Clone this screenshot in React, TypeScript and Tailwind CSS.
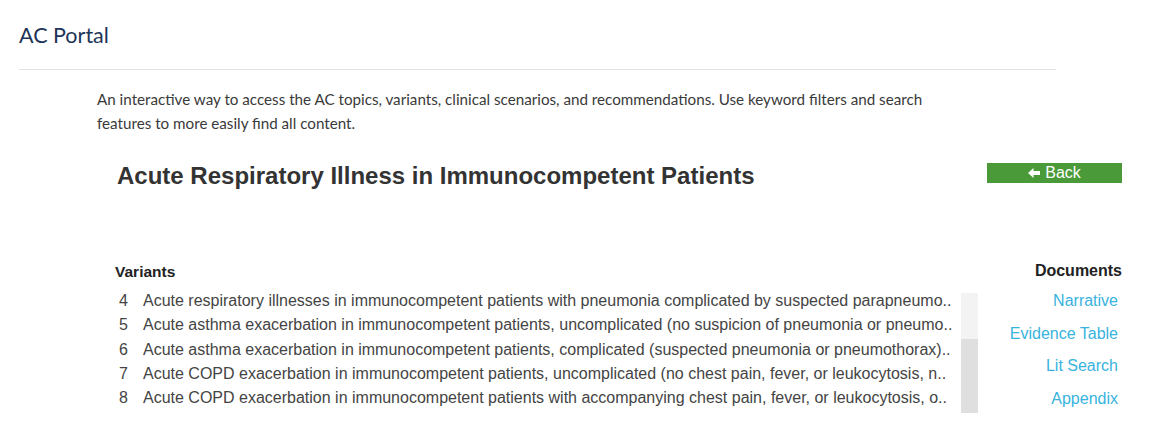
import React from "react";

const variants = [
  { id: 4, text: "Acute respiratory illnesses in immunocompetent patients with pneumonia complicated by suspected parapneumo.." },
  { id: 5, text: "Acute asthma exacerbation in immunocompetent patients, uncomplicated (no suspicion of pneumonia or pneumo.." },
  { id: 6, text: "Acute asthma exacerbation in immunocompetent patients, complicated (suspected pneumonia or pneumothorax).." },
  { id: 7, text: "Acute COPD exacerbation in immunocompetent patients, uncomplicated (no chest pain, fever, or leukocytosis, n.." },
  { id: 8, text: "Acute COPD exacerbation in immunocompetent patients with accompanying chest pain, fever, or leukocytosis, o.." },
];

const documents = ["Narrative", "Evidence Table", "Lit Search", "Appendix"];

const BackArrow = () => (
  <svg width="12" height="10" viewBox="0 0 12 10" fill="white">
    <polygon points="0,5 5.5,0 5.5,3 12,3 12,7 5.5,7 5.5,10" />
  </svg>
);

export default function App() {
  return (
    <div className="w-[1159px] h-[436px] bg-white overflow-hidden">
      <div className="px-[19px] pt-[21px]">
        <h1 className="font-['Lato',sans-serif] text-[21.5px] leading-[28px] text-[#1d3557] font-normal">AC Portal</h1>
        <div className="w-[1037px] border-t border-[#e3e3e3] mt-[20px]" />
      </div>

      <div className="ml-[97px] w-[1025px]">
        <p className="mt-[17px] font-['Lato',sans-serif] text-[15.2px] leading-[24px] text-[#3a3a3a]">
          An interactive way to access the AC topics, variants, clinical scenarios, and recommendations. Use keyword filters and search
          <br />
          features to more easily find all content.
        </p>

        <div className="flex items-start justify-between mt-[27px] font-['Liberation_Sans',Arial,sans-serif]">
          <h2 className="ml-[20px] text-[24px] leading-[28px] font-bold text-[#333]">
            Acute Respiratory Illness in Immunocompetent Patients
          </h2>
          <button
            type="button"
            className="mt-[1px] w-[135px] h-[20px] bg-[#4a9a3a] flex items-center justify-center gap-[5px] text-white text-[16px] leading-[20px]"
          >
            <BackArrow />
            <span>Back</span>
          </button>
        </div>

        <div className="flex mt-[70px] font-['Liberation_Sans',Arial,sans-serif]">
          <div className="flex-1 pl-[18px]">
            <h3 className="text-[15.5px] leading-[20px] font-bold text-[#222] mt-[2px]">Variants</h3>
            <div className="flex items-start mt-[7px]">
              <ul className="w-[846px] h-[125px] overflow-hidden">
                {variants.map((v) => (
                  <li key={v.id} className="flex h-[24.25px] items-center text-[16px] text-[#444] whitespace-nowrap">
                    <span className="w-[13px] text-right">{v.id}</span>
                    <span className="ml-[15px] overflow-hidden">{v.text}</span>
                  </li>
                ))}
              </ul>
              <div className="mt-[4px] w-[17px] h-[120px] bg-[#f3f3f3] flex flex-col">
                <div className="mt-[46px] flex-1 bg-[#dfdfdf]" />
              </div>
            </div>
          </div>
          <div className="flex flex-col items-end">
            <h3 className="text-[16px] leading-[20px] font-bold text-[#222] mt-[1px]">Documents</h3>
            <div className="flex flex-col items-end gap-[12.7px] mt-[10px] pr-[4px]">
              {documents.map((d) => (
                <a key={d} href="#" className="text-[16px] leading-[20px] text-[#38b3de]">
                  {d}
                </a>
              ))}
            </div>
          </div>
        </div>
      </div>
    </div>
  );
}
